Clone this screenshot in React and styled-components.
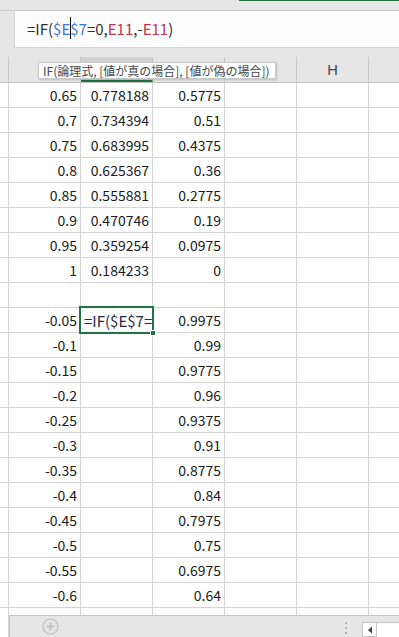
import styled, { createGlobalStyle } from 'styled-components'

const GlobalStyle = createGlobalStyle`
  html, body {
    margin: 0;
    padding: 0;
    background: #ffffff;
  }
  * {
    box-sizing: border-box;
  }
`

const rows = [
  ['0.65', '0.778188', '0.5775'],
  ['0.7', '0.734394', '0.51'],
  ['0.75', '0.683995', '0.4375'],
  ['0.8', '0.625367', '0.36'],
  ['0.85', '0.555881', '0.2775'],
  ['0.9', '0.470746', '0.19'],
  ['0.95', '0.359254', '0.0975'],
  ['1', '0.184233', '0'],
  ['', '', ''],
  ['-0.05', null, '0.9975'],
  ['-0.1', '', '0.99'],
  ['-0.15', '', '0.9775'],
  ['-0.2', '', '0.96'],
  ['-0.25', '', '0.9375'],
  ['-0.3', '', '0.91'],
  ['-0.35', '', '0.8775'],
  ['-0.4', '', '0.84'],
  ['-0.45', '', '0.7975'],
  ['-0.5', '', '0.75'],
  ['-0.55', '', '0.6975'],
  ['-0.6', '', '0.64'],
  ['-0.65', '', '0.5775']
]

// labels for D..G sit under the function tooltip, I is past the window edge
const columns = [
  { key: 'row', label: '' },
  { key: 'D', label: '' },
  { key: 'E', label: '', active: true },
  { key: 'F', label: '' },
  { key: 'G', label: '' },
  { key: 'H', label: 'H' },
  { key: 'I', label: '' }
]

export default function App() {
  return (
    <Page>
      <GlobalStyle />
      <TopStrip>
        <GreenEdge />
      </TopStrip>
      <FormulaRow>
        <Gutter />
        <FormulaBox>
          <Token>=IF(</Token>
          <Token $color="#3f73d0">$E</Token>
          <Caret />
          <Token $color="#3f73d0">$7</Token>
          <Token>=0,</Token>
          <Token $color="#c4314b">E11</Token>
          <Token>,-</Token>
          <Token $color="#c4314b">E11</Token>
          <Token>)</Token>
        </FormulaBox>
      </FormulaRow>
      <Spacer />
      <Sheet>
        <HeaderRow>
          {columns.map((c) => (
            <HeaderCell key={c.key} $active={c.active}>{c.label}</HeaderCell>
          ))}
          <Tooltip>IF(論理式, [値が真の場合], [値が偽の場合])</Tooltip>
        </HeaderRow>
        {rows.map((r, i) => (
          <Row key={i}>
            <Cell />
            <Cell>{r[0]}</Cell>
            {r[1] === null ? (
              <ActiveCell>
                <EditText>=IF($E$7=</EditText>
                <FillHandle />
              </ActiveCell>
            ) : (
              <Cell>{r[1]}</Cell>
            )}
            <Cell>{r[2]}</Cell>
            <Cell />
            <Cell />
            <Cell />
          </Row>
        ))}
      </Sheet>
      <BottomRow>
        <BottomGutter />
        <TabBar>
          <AddSheet>
            <svg width="17" height="17" viewBox="0 0 17 17">
              <circle cx="8.5" cy="8.5" r="7.5" fill="none" stroke="#bdbdbd" strokeWidth="1.2" />
              <path d="M8.5 4.5v8M4.5 8.5h8" stroke="#bdbdbd" strokeWidth="1.6" />
            </svg>
          </AddSheet>
          <Grip>
            <Dot />
            <Dot />
            <Dot />
          </Grip>
          <ScrollButton>
            <svg width="6" height="8" viewBox="0 0 6 8">
              <path d="M5 0.5v7L1 4z" fill="#444" />
            </svg>
          </ScrollButton>
          <Track />
        </TabBar>
      </BottomRow>
    </Page>
  )
}

const Page = styled.div`
  display: flex;
  flex-direction: column;
  width: 399px;
  height: 637px;
  overflow: hidden;
  background: #ffffff;
  font-family: "Noto Sans CJK JP", "Noto Sans", sans-serif;
`

const TopStrip = styled.div`
  display: flex;
  justify-content: flex-end;
  height: 11px;
  background: #e6e6e6;
  border-bottom: 1px solid #c8c8c8;
`

const GreenEdge = styled.div`
  width: 160px;
  height: 1px;
  background: #217346;
`

const FormulaRow = styled.div`
  display: flex;
  height: 37px;
`

const Gutter = styled.div`
  width: 14px;
  background: #e6e6e6;
`

const FormulaBox = styled.div`
  display: flex;
  align-items: center;
  flex: 1;
  padding-left: 12px;
  padding-bottom: 2px;
  background: #fdfdfd;
  border-left: 1px solid #d4d4d4;
  border-bottom: 1px solid #d4d4d4;
  font-size: 15px;
  color: #333333;
`

const Token = styled.span`
  color: ${({ $color }) => $color || '#333333'};
  white-space: pre;
`

const Caret = styled.span`
  display: inline-block;
  width: 1px;
  height: 22px;
  margin: 0 -0.5px;
  background: #000000;
`

const Spacer = styled.div`
  height: 9px;
  background: #e6e6e6;
`

const Sheet = styled.div`
  flex: 1;
  overflow: hidden;
`

const gridCols = '9px repeat(6, 72px)'

const HeaderRow = styled.div`
  position: relative;
  display: grid;
  grid-template-columns: ${gridCols};
  height: 26px;
  background: #e6e6e6;
  border-bottom: 1px solid #bfbfbf;
`

const HeaderCell = styled.div`
  display: flex;
  align-items: center;
  justify-content: center;
  border-right: 1px solid #c6c6c6;
  border-bottom: 2px solid ${({ $active }) => ($active ? '#217346' : 'transparent')};
  background: ${({ $active }) => ($active ? '#d2d2d2' : 'transparent')};
  font-family: "Noto Sans", sans-serif;
  font-size: 15px;
  color: #444444;
`

const Tooltip = styled.div`
  position: absolute;
  left: 38px;
  top: 5px;
  height: 17px;
  padding: 0 5px 0 4px;
  display: flex;
  align-items: center;
  background: #ffffff;
  border: 1px solid #c8c8c8;
  box-shadow: 1px 1px 2px rgba(0, 0, 0, 0.18);
  font-size: 12px;
  color: #444444;
  white-space: nowrap;
`

const Row = styled.div`
  display: grid;
  grid-template-columns: ${gridCols};
  height: 25px;
`

const Cell = styled.div`
  display: flex;
  align-items: center;
  justify-content: flex-end;
  padding-right: 3px;
  border-right: 1px solid #d4d4d4;
  border-bottom: 1px solid #d4d4d4;
  font-size: 14px;
  color: #1a1a1a;
  overflow: hidden;
  white-space: nowrap;
`

const ActiveCell = styled.div`
  position: relative;
  display: flex;
  align-items: center;
  padding-left: 3px;
  border-right: 1px solid #d4d4d4;
  border-bottom: 1px solid #d4d4d4;
  font-size: 15px;
  color: #1f2a44;

  &::after {
    content: '';
    position: absolute;
    left: -2px;
    top: -2px;
    right: -2px;
    bottom: -2px;
    border: 2px solid #217346;
  }
`

const EditText = styled.span`
  overflow: hidden;
  white-space: nowrap;
`

const FillHandle = styled.div`
  position: absolute;
  right: -4px;
  bottom: -4px;
  width: 6px;
  height: 6px;
  background: #217346;
  border: 1px solid #ffffff;
  z-index: 1;
`

const BottomRow = styled.div`
  display: flex;
  height: 22px;
`

const BottomGutter = styled.div`
  width: 9px;
  border-right: 1px solid #d4d4d4;
`

const TabBar = styled.div`
  display: flex;
  align-items: flex-end;
  flex: 1;
  background: #e6e6e6;
  border-top: 1px solid #c6c6c6;
  border-left: 1px solid #c6c6c6;
`

const AddSheet = styled.div`
  display: flex;
  align-items: center;
  height: 21px;
  margin-left: 32px;
`

const Grip = styled.div`
  display: flex;
  flex-direction: column;
  gap: 3px;
  margin-left: auto;
  margin-right: 15px;
  padding-bottom: 3px;
`

const Dot = styled.div`
  width: 2px;
  height: 2px;
  background: #b0b0b0;
`

const ScrollButton = styled.div`
  display: flex;
  align-items: center;
  justify-content: center;
  width: 15px;
  height: 15px;
  background: #ffffff;
  border: 1px solid #c6c6c6;
`

const Track = styled.div`
  width: 22px;
  height: 15px;
  background: #ffffff;
  border-top: 1px solid #c6c6c6;
`
